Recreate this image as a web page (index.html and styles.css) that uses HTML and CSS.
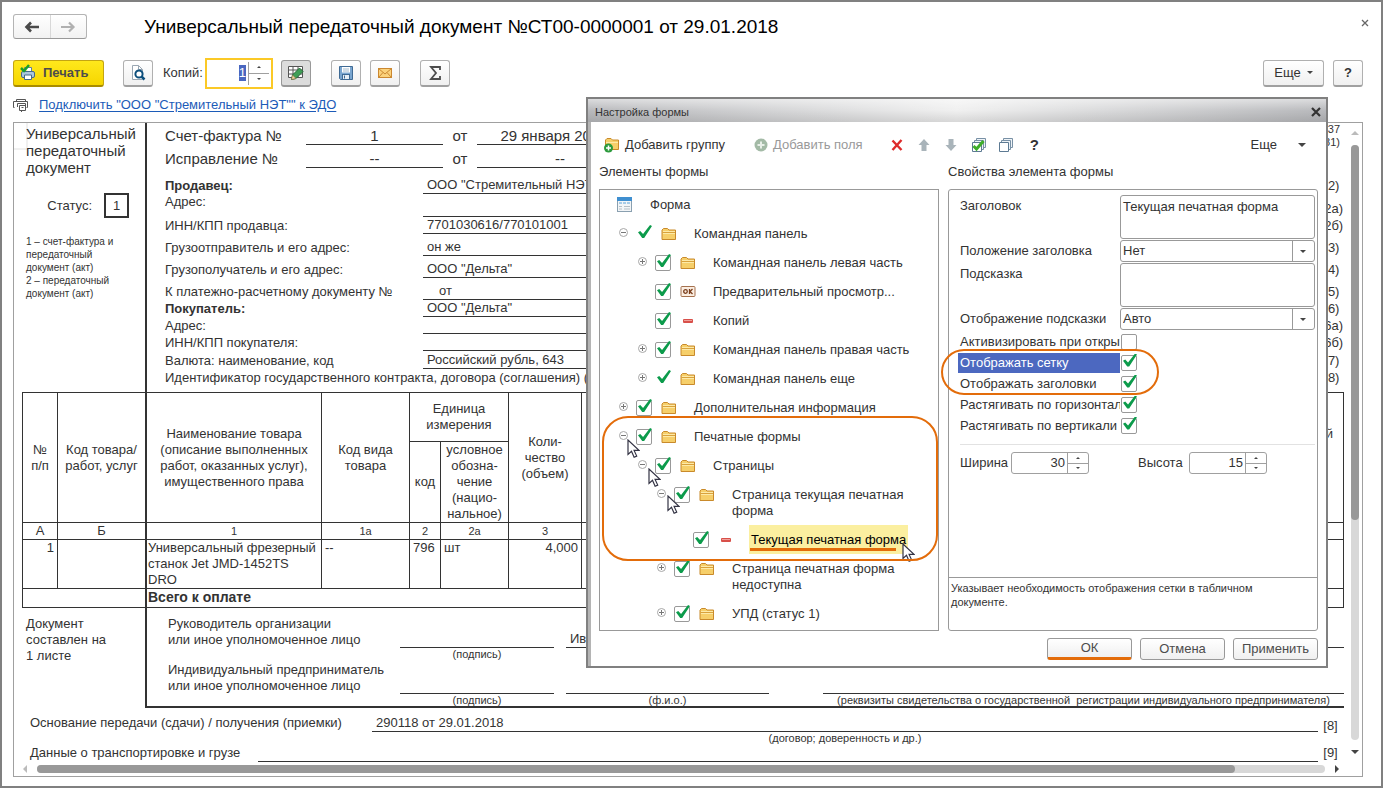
FILE: index.html
```html
<!DOCTYPE html>
<html lang="ru">
<head>
  <meta charset="UTF-8">
  <meta name="viewport" content="width=device-width, initial-scale=1.0">
  <title>Универсальный передаточный документ</title>
  <link rel="stylesheet" href="styles.css">
</head>
<body>
  <!-- shared icons -->
  <svg class="sprite" xmlns="http://www.w3.org/2000/svg">
    <symbol id="folder" viewBox="0 0 16 14">
      <path d="M1 12.500V3l1.500-1.500h4L8 3h6.500v9.500z" fill="#f6cf6a" stroke="#c98a2b"/>
      <path d="M1.500 5.500h12.500" stroke="#d9a23c"/>
      <path d="M2 4.500h12M2 6.500h12" stroke="#fdeaa8"/>
    </symbol>
    <symbol id="minus" viewBox="0 0 16 14">
      <rect x="3" y="5" width="10" height="4" rx="1" fill="#d8504a"/>
      <path d="M4 6.500h8" stroke="#f0a09a"/>
    </symbol>
    <symbol id="okbtn" viewBox="0 0 16 14">
      <rect x="1" y="1.500" width="14" height="10" rx="1" fill="#fbeee2" stroke="#a5714e"/>
      <circle cx="5.500" cy="6.500" r="1.800" fill="none" stroke="#7a3e1c" stroke-width="1.300"/>
      <path d="M9.500 4v5M12.500 4l-2.500 2.500 2.500 2.500" fill="none" stroke="#7a3e1c" stroke-width="1.300"/>
    </symbol>
    <symbol id="open" viewBox="0 0 11 11">
      <circle cx="5.500" cy="5.500" r="4" fill="#fff" stroke="#a8a8a8"/>
      <path d="M3 5.500h5" stroke="#777"/>
    </symbol>
    <symbol id="shut" viewBox="0 0 11 11">
      <circle cx="5.500" cy="5.500" r="4" fill="#fff" stroke="#a8a8a8"/>
      <path d="M3 5.500h5M5.500 3v5" stroke="#777"/>
    </symbol>
    <symbol id="pointer" viewBox="0 0 13 20">
      <path d="M1 1v14.500l3.500-3.200 2.600 6 2.600-1.200-2.600-5.700h4.900z" fill="#fff" stroke="#334" stroke-width="1.200"/>
    </symbol>
  </svg>

  <div class="window">
    <header class="titlebar">
      <div class="nav">
        <button aria-label="Назад"><svg width="16" height="12" viewBox="0 0 16 12"><path d="M2 6h13M7 1.500L2.500 6 7 10.500" fill="none" stroke="#4a4a4a" stroke-width="2.600"/></svg></button>
        <button aria-label="Вперед"><svg width="16" height="12" viewBox="0 0 16 12"><path d="M1 6h13M9 1.500L13.500 6 9 10.500" fill="none" stroke="#b0b0b0" stroke-width="2.200"/></svg></button>
      </div>
      <h1>Универсальный передаточный документ №СТ00-0000001 от 29.01.2018</h1>
      <button class="close" aria-label="Закрыть"><svg width="8" height="8" viewBox="0 0 8 8"><path d="M1 1l6 6M7 1L1 7" stroke="#666" stroke-width="1.300"/></svg></button>
    </header>

    <div class="toolbar">
      <button class="btn print">
        <svg width="16" height="17" viewBox="0 0 16 17">
          <path d="M4.500 6V3.500h7V8" fill="#fff" stroke="#5c7d99"/>
          <rect x="1.500" y="7.500" width="13" height="6" rx="1.500" fill="#a9c6dd" stroke="#44698a"/>
          <path d="M4.500 11h7v4.500h-7z" fill="#fff" stroke="#44698a"/>
          <path d="M1 4l3 3 5-6" fill="none" stroke="#19a02a" stroke-width="2.500"/>
        </svg>
        Печать
      </button>
      <button class="btn preview" aria-label="Просмотр">
        <svg width="16" height="18" viewBox="0 0 16 18"><path d="M2.500 1.500h6l4 4v10h-10z" fill="#fff" stroke="#9aa7b3"/><path d="M8.500 1.500v4h4" fill="none" stroke="#9aa7b3"/><circle cx="9" cy="10" r="3.600" fill="#fff" stroke="#0d4f7c" stroke-width="2"/><path d="M11.500 12.500l3 3" stroke="#0d4f7c" stroke-width="2.500"/></svg>
      </button>
      <label for="copies">Копий:</label>
      <div class="spin copies">
        <input id="copies" type="text" value="1">
        <div class="arrows"><button class="up" aria-label="Больше"></button><button class="down" aria-label="Меньше"></button></div>
      </div>
      <button class="btn pressed" aria-label="Редактирование">
        <svg width="18" height="16" viewBox="0 0 18 16"><path d="M1.500 1.500h14v11h-14zM1.500 5h14M1.500 9h14M6 1.500v11M11 1.500v11" fill="#fff" stroke="#555"/><path d="M4.500 14.500l1-4.500 7-7 3.500 3.500-7 7z" fill="#3f9f56" stroke="#2a6d3b"/><path d="M4.500 14.500l1-4.500 3.500 3.500z" fill="#f0d2a0" stroke="#8a6a40" stroke-width=".6"/></svg>
      </button>
      <button class="btn save" aria-label="Сохранить">
        <svg width="16" height="16" viewBox="0 0 16 16"><path d="M1.500 1.500h13v13h-12l-1-1z" fill="#79a5cf" stroke="#3f6a94"/><rect x="4" y="2" width="8" height="5.500" fill="#fff"/><path d="M5 4h6M5 6h6" stroke="#a0b8cc"/><rect x="4.500" y="9.500" width="7" height="5" fill="#e6eef5" stroke="#3f6a94"/><path d="M6.500 10.500v3" stroke="#3f6a94"/></svg>
      </button>
      <button class="btn mail" aria-label="Отправить">
        <svg width="16" height="12" viewBox="0 0 16 12"><rect x="1.500" y="1.500" width="13" height="9" fill="#fbd27c" stroke="#cb8830"/><path d="M1.500 1.500L8 7l6.500-5.500M1.500 10.500L6 5.500M14.500 10.500L10 5.500" fill="none" stroke="#cb8830"/></svg>
      </button>
      <button class="btn sum" aria-label="Сумма">
        <svg width="14" height="16" viewBox="0 0 14 16"><path d="M12 5V2H3l5 6-5 6h9v-3" fill="none" stroke="#4c4c4c" stroke-width="1.800"/></svg>
      </button>
      <button class="btn more">Еще</button>
      <button class="btn help">?</button>
    </div>

    <div class="edo">
      <svg width="16" height="15" viewBox="0 0 16 15"><path d="M3.500 3.500v-2h9v2M1.500 9.500h-1v-6h14v6h-1M4.500 9v-3.500h8V9M6.500 7.500h6v5h-6zM8.500 9.500h2M8.500 14v-1.500" fill="none" stroke="#555"/></svg>
      <a href="#">Подключить "ООО "Стремительный НЭТ"" к ЭДО</a>
    </div>

    <main class="sheet">
      <div class="doc">
        <section class="top">
          <div class="side">
            <p class="name">Универсальный<br>передаточный<br>документ</p>
            <div class="status">Статус: <span>1</span></div>
            <p class="note">1 – счет-фактура и<br>передаточный<br>документ (акт)<br>2 – передаточный<br>документ (акт)</p>
          </div>
          <div class="facts">
            <div class="fact h22 big">
              <span class="head">Счет-фактура №</span><span class="num">1</span><span class="from">от</span><span class="date">29 января 2018 г.</span>
              <span class="law">№ 1137<br>№ 981)</span>
            </div>
            <div class="fact h23 big">
              <span class="head">Исправление №</span><span class="num">--</span><span class="from">от</span><span class="date">--</span>
            </div>
            <div class="fact h26"><b>Продавец:</b><span class="val">ООО "Стремительный НЭТ"</span><span class="code">(2)</span></div>
            <div class="fact h23"><span class="label-top">Адрес:</span><span class="val"></span><span class="code">(2а)</span></div>
            <div class="fact h17"><span>ИНН/КПП продавца:</span><span class="val">7701030616/770101001</span><span class="code">(2б)</span></div>
            <div class="fact h22"><span>Грузоотправитель и его адрес:</span><span class="val">он же</span><span class="code">(3)</span></div>
            <div class="fact h22"><span>Грузополучатель и его адрес:</span><span class="val">ООО "Дельта"</span><span class="code">(4)</span></div>
            <div class="fact h22"><span>К платежно-расчетному документу №</span><span class="val inset">от</span><span class="code">(5)</span></div>
            <div class="fact h17"><b>Покупатель:</b><span class="val">ООО "Дельта"</span><span class="code">(6)</span></div>
            <div class="fact h17"><span>Адрес:</span><span class="val"></span><span class="code">(6а)</span></div>
            <div class="fact h17"><span>ИНН/КПП покупателя:</span><span class="val"></span><span class="code">(6б)</span></div>
            <div class="fact h18"><span>Валюта: наименование, код</span><span class="val">Российский рубль, 643</span><span class="code">(7)</span></div>
            <div class="fact h17 long"><span>Идентификатор государственного контракта, договора (соглашения) (при наличии)</span><span class="code">(8)</span></div>
          </div>
        </section>

        <table class="goods">
          <colgroup>
            <col class="c-n"><col class="c-code"><col class="c-name"><col class="c-kind"><col class="c-unit"><col class="c-unitname"><col class="c-qty"><col><col class="c-reg">
          </colgroup>
          <thead>
            <tr class="r-unit">
              <th rowspan="2">№<br>п/п</th>
              <th rowspan="2" class="bold-edge">Код товара/<br>работ, услуг</th>
              <th rowspan="2">Наименование товара<br>(описание выполненных<br>работ, оказанных услуг),<br>имущественного права</th>
              <th rowspan="2">Код вида<br>товара</th>
              <th colspan="2">Единица<br>измерения</th>
              <th rowspan="2">Коли-<br>чество<br>(объем)</th>
              <th rowspan="2">Цена (тариф)<br>за единицу<br>измерения</th>
              <th rowspan="2">Регистрационный<br>номер<br>таможенной<br>декларации</th>
            </tr>
            <tr class="r-sub">
              <th>код</th>
              <th>условное<br>обозна-<br>чение<br>(нацио-<br>нальное)</th>
            </tr>
            <tr class="r-index">
              <th class="letter">А</th><th class="letter bold-edge">Б</th><th>1</th><th>1а</th><th>2</th><th>2а</th><th>3</th><th>4</th><th>11</th>
            </tr>
          </thead>
          <tbody>
            <tr class="r-item">
              <td class="right">1</td><td class="bold-edge"></td><td class="item-name">Универсальный фрезерный станок Jet JMD-1452TS DRO</td><td>--</td><td>796</td><td>шт</td><td class="right">4,000</td><td></td><td></td>
            </tr>
            <tr class="r-total">
              <td colspan="2" class="bold-edge"></td><td colspan="7" class="item-name">Всего к оплате</td>
            </tr>
          </tbody>
        </table>

        <section class="signs">
          <div class="side pages">Документ<br>составлен на<br>1 листе</div>
          <div class="people">
            <div class="person">
              <span class="who">Руководитель организации<br>или иное уполномоченное лицо</span>
              <div class="slot"><span class="line"></span><small>(подпись)</small></div>
              <div class="slot"><span class="line">Иванов И. И.</span><small>(ф.и.о.)</small></div>
              <div class="slot wide"><span class="line"></span></div>
            </div>
            <div class="person">
              <span class="who">Индивидуальный предприниматель<br>или иное уполномоченное лицо</span>
              <div class="slot"><span class="line"></span><small>(подпись)</small></div>
              <div class="slot"><span class="line"></span><small>(ф.и.о.)</small></div>
              <div class="slot wide"><span class="line"></span><small>(реквизиты свидетельства о государственной &nbsp;регистрации индивидуального предпринимателя)</small></div>
            </div>
          </div>
        </section>

        <div class="basis">
          <span class="basis-label">Основание передачи (сдачи) / получения (приемки)</span>
          <div class="slot"><span class="line">290118 от 29.01.2018</span><small>(договор; доверенность и др.)</small></div>
          <span class="code">[8]</span>
        </div>
        <div class="basis cargo">
          <span class="basis-label">Данные о транспортировке и грузе</span>
          <div class="slot"><span class="line"></span></div>
          <span class="code">[9]</span>
        </div>
      </div>
      <div class="vbar"><i class="tri tri-up"></i><div class="track"><div class="thumb"></div></div><i class="tri tri-down"></i></div>
      <div class="hbar"><i class="tri tri-left"></i><div class="track"><div class="thumb"></div></div><i class="tri tri-right"></i></div>
    </main>
  </div>

  <div class="dialog" role="dialog" aria-label="Настройка формы">
    <div class="dialog-title">
      <span>Настройка формы</span>
      <button aria-label="Закрыть"><svg width="10" height="10" viewBox="0 0 10 10"><path d="M1 1l8 8M9 1L1 9" stroke="#333" stroke-width="2.200"/></svg></button>
    </div>
    <div class="dialog-body">
      <div class="tools">
        <button class="add-group">
          <svg width="16" height="16" viewBox="0 0 16 16"><path d="M1.500 12.500V3L3 1.500h4L8.500 3h6v9.500z" fill="#f6cf6a" stroke="#c98a2b"/><path d="M2 5.500h12" stroke="#fdeaa8"/><circle cx="4.500" cy="11" r="4.500" fill="#2c9a3d"/><path d="M2 11h5M4.500 8.500v5" stroke="#fff" stroke-width="1.500"/></svg>
          Добавить группу
        </button>
        <button class="add-field" disabled>
          <svg width="14" height="14" viewBox="0 0 14 14"><circle cx="7" cy="7" r="6.500" fill="#a3baa6"/><path d="M3.500 7h7M7 3.500v7" stroke="#e8efe8" stroke-width="2"/></svg>
          Добавить поля
        </button>
        <button class="del" aria-label="Удалить"><svg width="12" height="12" viewBox="0 0 12 12"><path d="M1.500 1.500l9 9.500M10.500 1L1.500 11" stroke="#dd2b2b" stroke-width="2.400"/></svg></button>
        <button class="move-up" aria-label="Вверх"><svg width="12" height="12" viewBox="0 0 12 12"><path d="M6 0l5.500 6H8.500v6h-5V6H.5z" fill="#a9b4ba"/></svg></button>
        <button class="move-down" aria-label="Вниз"><svg width="12" height="12" viewBox="0 0 12 12"><path d="M6 12l5.500-6H8.500V0h-5v6H.5z" fill="#a9b4ba"/></svg></button>
        <button class="all" aria-label="Установить флажки"><svg width="16" height="16" viewBox="0 0 16 16"><path d="M5.500 4V1.500h9v9H12M3.500 5.500v-2h9v9h-2" fill="#eef3f7" stroke="#7890a5"/><path d="M1.500 5.500h9v9h-9z" fill="#fff" stroke="#5d7a93"/><path d="M2.500 9l3 3 7-8" fill="none" stroke="#3fae2a" stroke-width="3"/></svg></button>
        <button class="none" aria-label="Снять флажки"><svg width="16" height="16" viewBox="0 0 16 16"><path d="M5.500 4V1.500h9v9H12M3.500 5.500v-2h9v9h-2" fill="#eef3f7" stroke="#7890a5"/><path d="M1.500 5.500h9v9h-9z" fill="#fff" stroke="#5d7a93"/></svg></button>
        <button class="ask">?</button>
        <button class="more">Еще <i class="tri tri-down"></i></button>
      </div>

      <div class="columns">
        <section>
          <h2>Элементы формы</h2>
          <ul class="tree">
            <li class="root"><svg width="15" height="15" viewBox="0 0 15 15"><rect x=".5" y=".5" width="14" height="14" fill="#f2f5f7" stroke="#8aa0b0"/><path d="M0 0h15v4H0z" fill="#3f8fd0"/><path d="M2 6h3M6 6h3M10 6h3" stroke="#5ba2d8"/><path d="M2 9.500h3M7 9.500h6M2 12h3M7 12h6" stroke="#b5bfc6"/></svg><span>Форма</span></li>
            <li class="l1"><svg class="tg"><use href="#open"/></svg><input type="checkbox" class="bare" id="t1" checked><svg class="ic"><use href="#folder"/></svg><label for="t1">Командная панель</label></li>
            <li class="l2"><svg class="tg"><use href="#shut"/></svg><input type="checkbox" id="t2" checked><svg class="ic"><use href="#folder"/></svg><label for="t2">Командная панель левая часть</label></li>
            <li class="l2"><i class="tg"></i><input type="checkbox" id="t3" checked><svg class="ic"><use href="#okbtn"/></svg><label for="t3">Предварительный просмотр...</label></li>
            <li class="l2"><i class="tg"></i><input type="checkbox" id="t4" checked><svg class="ic"><use href="#minus"/></svg><label for="t4">Копий</label></li>
            <li class="l2"><svg class="tg"><use href="#shut"/></svg><input type="checkbox" id="t5" checked><svg class="ic"><use href="#folder"/></svg><label for="t5">Командная панель правая часть</label></li>
            <li class="l2"><svg class="tg"><use href="#shut"/></svg><input type="checkbox" class="bare" id="t6" checked><svg class="ic"><use href="#folder"/></svg><label for="t6">Командная панель еще</label></li>
            <li class="l1"><svg class="tg"><use href="#shut"/></svg><input type="checkbox" id="t7" checked><svg class="ic"><use href="#folder"/></svg><label for="t7">Дополнительная информация</label></li>
            <li class="l1"><svg class="tg"><use href="#open"/></svg><input type="checkbox" id="t8" checked><svg class="ic"><use href="#folder"/></svg><label for="t8">Печатные формы</label><svg class="pointer"><use href="#pointer"/></svg></li>
            <li class="l2"><svg class="tg"><use href="#open"/></svg><input type="checkbox" id="t9" checked><svg class="ic"><use href="#folder"/></svg><label for="t9">Страницы</label><svg class="pointer"><use href="#pointer"/></svg></li>
            <li class="l3"><svg class="tg"><use href="#open"/></svg><input type="checkbox" id="t10" checked><svg class="ic"><use href="#folder"/></svg><label for="t10">Страница текущая печатная форма</label><svg class="pointer"><use href="#pointer"/></svg></li>
            <li class="l4 current"><i class="tg"></i><input type="checkbox" id="t11" checked><svg class="ic"><use href="#minus"/></svg><label for="t11">Текущая печатная форма</label><svg class="pointer"><use href="#pointer"/></svg></li>
            <li class="l3"><svg class="tg"><use href="#shut"/></svg><input type="checkbox" id="t12" checked><svg class="ic"><use href="#folder"/></svg><label for="t12">Страница печатная форма недоступна</label></li>
            <li class="l3"><svg class="tg"><use href="#shut"/></svg><input type="checkbox" id="t13" checked><svg class="ic"><use href="#folder"/></svg><label for="t13">УПД (статус 1)</label></li>
          </ul>
        </section>

        <section>
          <h2>Свойства элемента формы</h2>
          <div class="props">
            <form class="fields">
              <div class="field"><label for="f1">Заголовок</label><textarea id="f1">Текущая печатная форма</textarea></div>
              <div class="field"><label for="f2">Положение заголовка</label><div class="pick"><select id="f2"><option>Нет</option></select></div></div>
              <div class="field"><label for="f3">Подсказка</label><textarea id="f3"></textarea></div>
              <div class="field"><label for="f4">Отображение подсказки</label><div class="pick"><select id="f4"><option>Авто</option></select></div></div>
              <div class="tick"><label for="f5">Активизировать при открытии</label><input type="checkbox" id="f5"></div>
              <div class="tick selected"><label for="f6">Отображать сетку</label><input type="checkbox" id="f6" checked></div>
              <div class="tick"><label for="f7">Отображать заголовки</label><input type="checkbox" id="f7" checked></div>
              <div class="tick"><label for="f8">Растягивать по горизонтали</label><input type="checkbox" id="f8" checked></div>
              <div class="tick"><label for="f9">Растягивать по вертикали</label><input type="checkbox" id="f9" checked></div>
              <div class="size">
                <label for="w">Ширина</label>
                <div class="spin"><input id="w" type="text" value="30"><div class="arrows"><button type="button" class="up" aria-label="Больше"></button><button type="button" class="down" aria-label="Меньше"></button></div></div>
                <label for="h" class="second">Высота</label>
                <div class="spin"><input id="h" type="text" value="15"><div class="arrows"><button type="button" class="up" aria-label="Больше"></button><button type="button" class="down" aria-label="Меньше"></button></div></div>
              </div>
            </form>
            <p class="hint">Указывает необходимость отображения сетки в табличном документе.</p>
          </div>
        </section>
      </div>

      <div class="actions">
        <button class="ok">ОК</button>
        <button>Отмена</button>
        <button>Применить</button>
      </div>
    </div>
    <div class="ring ring-tree"></div>
    <div class="ring ring-props"></div>
  </div>

  <script>
    document.getElementById('copies').select();
  </script>
</body>
</html>
```
FILE: styles.css
```css
* {
  box-sizing: border-box;
}
body {
  margin: 0;
  font: 13px/16px "Liberation Sans", Arial, sans-serif;
  color: #333;
  background: #fff;
}
h1, h2, p, ul {
  margin: 0;
  padding: 0;
  font-weight: normal;
}
button, input, select, textarea {
  font: inherit;
  color: inherit;
  margin: 0;
  padding: 0;
  border: none;
  background: none;
  outline: none;
}
button {
  display: flex;
  align-items: center;
  justify-content: center;
}
svg {
  display: block;
  flex: none;
}
.sprite {
  position: absolute;
  width: 0;
  height: 0;
}
.window {
  display: flex;
  flex-direction: column;
  min-height: 100vh;
  padding: 12px 18px 9px 11px;
  border: 2px solid #808080;
}

/* header */
.titlebar {
  display: flex;
  align-items: center;
}
.nav {
  display: flex;
  width: 74px;
  height: 25px;
  border: 1px solid #b4b4b4;
  border-bottom-color: #999;
  border-radius: 3px;
  background: linear-gradient(#fff, #f2f2f2);
}
.nav button {
  flex: 1;
}
.nav button + button {
  border-left: 1px solid #d8d8d8;
}
h1 {
  flex: 1;
  margin-left: 57px;
  font-size: 19px;
  line-height: 25px;
  color: #000;
}
.close {
  position: relative;
  width: 16px;
  height: 16px;
  margin: -8px -10px 0 0;
}

/* toolbar */
.toolbar {
  display: flex;
  align-items: center;
  height: 32px;
  margin-top: 18px;
}
.btn {
  width: 30px;
  height: 27px;
  border: 1px solid #b0b0b0;
  border-bottom: 2px solid #a0a0a0;
  border-radius: 3px;
  background: linear-gradient(#fff, #f0f0f0);
}
.print {
  justify-content: flex-start;
  gap: 7px;
  width: 91px;
  padding-left: 6px;
  border-color: #c4a512;
  border-bottom-color: #a98c00;
  background: linear-gradient(#ffe81c, #f6d600);
  font-weight: bold;
  color: #4c4c4c;
}
.preview {
  margin: 0 10px 0 19px;
}
.toolbar label {
  width: 42px;
}
.pressed {
  margin-left: 8px;
  border-color: #999;
  background: #dcdcdc;
}
.save {
  margin-left: 20px;
}
.mail {
  margin-left: 9px;
}
.sum {
  margin-left: 20px;
}
.toolbar .more {
  width: 61px;
  gap: 6px;
  margin: 0 9px 0 auto;
}
.toolbar .more::after {
  content: "";
  border: 3px solid transparent;
  border-top-color: #444;
  border-bottom: none;
}
.help {
  font-weight: bold;
}
.edo {
  display: flex;
  align-items: center;
  gap: 10px;
  height: 32px;
}
.edo a {
  color: #1c5bb8;
  text-underline-offset: 2px;
}

/* numeric box with arrows */
.spin {
  display: flex;
  width: 78px;
  height: 22px;
  border: 1px solid #a0a0a0;
  border-radius: 3px;
  background: #fff;
}
.spin input {
  flex: 1;
  min-width: 0;
  padding-right: 2px;
  text-align: right;
}
.arrows {
  display: flex;
  flex-direction: column;
  width: 21px;
  border-left: 1px solid #a0a0a0;
}
.arrows button {
  flex: 1;
}
.arrows .up {
  border-bottom: 1px solid #a0a0a0;
}
.arrows button::after {
  content: "";
  border: 2px solid transparent;
}
.arrows .up::after {
  border-bottom-color: #444;
  border-top: none;
}
.arrows .down::after {
  border-top-color: #444;
  border-bottom: none;
}
.copies {
  width: 68px;
  height: 31px;
  padding: 2px;
  border: 2px solid #fbc926;
  border-radius: 0;
}
.copies input::selection {
  background: #4a67c0;
  color: #fff;
}

/* printed form */
.sheet {
  flex: 1;
  display: grid;
  grid-template-columns: 1fr 17px;
  grid-template-rows: 1fr auto;
  margin-top: 1px;
  border: 1px solid #a0a0a0;
}
.doc {
  position: relative;
  z-index: 0;
  padding: 0 1px 0 8px;
}
.doc::before {
  content: "";
  position: absolute;
  z-index: -1;
  left: 0;
  top: 0;
  width: 12px;
  height: 25px;
  border: solid #f0f0f0;
  border-width: 0 2px 2px 0;
}
.top, .signs {
  display: flex;
}
.side {
  flex: none;
  width: 123px;
  padding-left: 4px;
}
.top {
  height: 269px;
}
.name {
  margin-top: 2px;
  font-size: 15px;
  line-height: 17px;
}
.status {
  display: flex;
  align-items: center;
  justify-content: flex-end;
  gap: 12px;
  margin: 17px 16px 17px 0;
}
.status span {
  width: 25px;
  height: 25px;
  border: 2px solid #333;
  line-height: 21px;
  text-align: center;
}
.note {
  font-size: 10px;
  line-height: 13px;
}
.facts {
  position: relative;
  flex: 1;
  padding-left: 18px;
  border-left: 2px solid #333;
}
.fact {
  display: flex;
  align-items: flex-end;
}
.h17 {
  height: 17px;
}
.h18 {
  height: 18px;
}
.h22 {
  height: 22px;
}
.h23 {
  height: 23px;
}
.h26 {
  height: 26px;
}
.fact > :first-child {
  width: 258px;
}
.fact .label-top {
  align-self: flex-start;
}
.val, .num, .date, .line {
  height: 17px;
  border-bottom: 1px solid #333;
}
.val {
  flex: 1;
  padding-left: 4px;
}
.inset {
  padding-left: 16px;
}
.code {
  width: 25px;
  text-align: center;
}
.big {
  font-size: 15px;
}
.big .head {
  width: 141px;
  padding-bottom: 1px;
}
.num {
  width: 137px;
  text-align: center;
}
.from {
  width: 34px;
  padding-bottom: 1px;
  text-align: center;
}
.date {
  width: 166px;
  text-align: center;
}
.law {
  position: absolute;
  top: 0;
  right: 4px;
  font-size: 11px;
  line-height: 13px;
  text-align: right;
}
.fact.long {
  justify-content: space-between;
}
.fact.long > :first-child {
  width: auto;
}

/* goods */
.goods {
  width: 100%;
  table-layout: fixed;
  border-collapse: separate;
  border-spacing: 0;
  border-top: 1px solid #333;
}
.goods th, .goods td {
  padding: 0 2px;
  border: solid #333;
  border-width: 0 1px 1px 0;
}
.goods tr > :first-child {
  border-left-width: 1px;
}
.goods .r-sub > :first-child {
  border-left-width: 0;
}
.goods .bold-edge {
  border-right-width: 2px;
}
.goods th {
  font-weight: normal;
  text-align: center;
}
.goods td {
  padding-left: 3px;
  vertical-align: top;
}
.goods .item-name {
  padding-left: 1px;
}
.goods td.right {
  padding-right: 3px;
  text-align: right;
}
.c-n {
  width: 36px;
}
.c-code {
  width: 89px;
}
.c-name {
  width: 175px;
}
.c-kind {
  width: 88px;
}
.c-unit {
  width: 31px;
}
.c-unitname {
  width: 68px;
}
.c-qty {
  width: 73px;
}
.c-reg {
  width: 128px;
}
.r-unit {
  height: 49px;
}
.r-sub {
  height: 81px;
}
.r-index {
  height: 17px;
  font-size: 11px;
}
.r-index .letter {
  font-size: 13px;
}
.r-item {
  height: 49px;
}
.r-total {
  height: 19px;
  font-weight: bold;
  font-size: 14px;
}

/* signatures */
.pages {
  padding-top: 8px;
}
.people {
  flex: 1;
  padding: 8px 0 0 21px;
  border: solid #333;
  border-width: 0 0 2px 2px;
}
.person {
  display: flex;
  align-items: flex-start;
  height: 46px;
}
.who {
  width: 232px;
}
.slot {
  display: flex;
  flex-direction: column;
  width: 154px;
  padding-top: 15px;
  margin-right: 12px;
}
.slot + .slot {
  width: 203px;
  margin-right: 54px;
}
.slot.wide {
  flex: 1;
  width: auto;
  margin-right: 0;
}
.slot .line {
  padding-left: 4px;
}
small {
  font-size: 11px;
  line-height: 13px;
  text-align: center;
}
.person:last-child {
  height: 44px;
}
.basis {
  display: flex;
  align-items: flex-start;
  padding: 7px 1px 0 8px;
}
.basis-label {
  width: 342px;
}
.basis .slot {
  flex: 1;
  margin: 0;
  padding: 0;
}
.basis .code {
  padding-top: 3px;
}
.cargo {
  height: 18px;
  padding-top: 0;
}
.cargo .basis-label {
  width: 228px;
}
.cargo .code {
  padding-top: 0;
}

/* scroll bars */
.tri {
  border: 4px solid transparent;
}
.tri-up {
  border-bottom-color: #bbb;
  border-top: none;
}
.tri-down {
  border-top-color: #444;
  border-bottom: none;
}
.tri-left {
  border-right-color: #bbb;
  border-left: none;
}
.tri-right {
  border-left-color: #444;
  border-right: none;
}
.vbar {
  display: flex;
  flex-direction: column;
  align-items: center;
  gap: 10px;
  padding: 8px 0 11px 3px;
}
.vbar .track {
  flex: 1;
  width: 8px;
}
.track {
  border-radius: 4px;
  background: #d8d8d8;
}
.thumb {
  border-radius: 4px;
  background: #999;
}
.vbar .thumb {
  height: 63%;
}
.hbar {
  grid-column: 1 / 3;
  display: flex;
  align-items: center;
  gap: 10px;
  padding: 0 23px 3px 9px;
}
.hbar .track {
  flex: 1;
  height: 8px;
}
.hbar .thumb {
  width: 93%;
  height: 8px;
}

/* settings dialog */
.dialog {
  position: absolute;
  left: 586px;
  top: 97px;
  width: 742px;
  border: 2px solid #808080;
  background: #fff;
}
.dialog-title {
  display: flex;
  align-items: center;
  justify-content: space-between;
  height: 23px;
  padding: 2px 4px 0 7px;
  background: linear-gradient(to bottom, rgba(255,255,255,.5), rgba(255,255,255,0) 50%, rgba(0,0,0,.1)), linear-gradient(to right, #b8b9bc, #f0f0f0 50%, #b8b9bc);
  font-size: 11px;
}
.dialog-title button {
  width: 12px;
  height: 12px;
}
.dialog-body {
  padding: 9px 8px 6px 8px;
  border-left: 3px solid #b4b4b4;
}
.tools {
  display: flex;
  align-items: center;
  height: 28px;
  padding: 0 12px 0 5px;
}
.tools button {
  gap: 5px;
}
.add-field {
  margin-left: 29px;
  color: #999;
}
.tools .del {
  margin-left: 28px;
}
.tools .move-up, .tools .move-down {
  margin-left: 15px;
}
.tools .all {
  margin-left: 14px;
}
.tools .none {
  margin-left: 11px;
}
.tools .ask {
  margin-left: 16px;
  font-size: 15px;
  font-weight: bold;
}
.tools .more {
  gap: 21px;
  margin-left: auto;
}
.columns {
  display: grid;
  grid-template-columns: 340px 1fr;
  gap: 9px;
}
h2 {
  height: 30px;
  padding-top: 5px;
  font-size: 13px;
}
.tree {
  height: 442px;
  border: 1px solid #999;
  list-style: none;
}
.tree li {
  position: relative;
  display: flex;
  align-items: flex-start;
  min-height: 29px;
  padding: 7px 20px 0 18px;
}
.tree li.root {
  gap: 18px;
  padding-left: 17px;
}
.tree .l2 {
  padding-left: 37px;
}
.tree .l3 {
  padding-left: 56px;
  padding-bottom: 6px;
}
.tree .l4 {
  padding-left: 75px;
}
.tg {
  flex: none;
  width: 11px;
  height: 11px;
  margin: 1px 7px 0 0;
}
.ic {
  width: 16px;
  height: 14px;
  margin: 1px 17px 0 9px;
}
input[type="checkbox"] {
  appearance: none;
  position: relative;
  flex: none;
  width: 16px;
  height: 16px;
  border: 1px solid #999;
  border-radius: 2px;
  background: #fff;
}
input.bare {
  border-color: transparent;
}
input[type="checkbox"]:checked::after {
  content: "";
  position: absolute;
  left: 1px;
  top: -2px;
  width: 14px;
  height: 13px;
  background: #0c9b4b;
  clip-path: polygon(0 55%, 16% 46%, 36% 70%, 86% 0, 100% 8%, 44% 100%, 30% 100%);
}
.current label {
  flex: 1;
  margin: -7px -8px 0 -2px;
  padding: 7px 2px 6px;
  background: linear-gradient(#e36c0a, #e36c0a) 1px 23px / 146px 3px no-repeat #fbefa0;
  color: #000;
  white-space: nowrap;
}
.tree .l4 {
  padding-right: 39px;
}
.pointer {
  position: absolute;
  left: 27px;
  top: 17px;
  width: 13px;
  height: 20px;
}
.l2 .pointer {
  left: 48px;
}
.l3 .pointer {
  left: 67px;
  top: 15px;
}
.l4 .pointer {
  left: 302px;
  top: 18px;
}
.ring {
  position: absolute;
  border: 2px solid #e36c0a;
}
.ring-tree {
  left: 14px;
  top: 317px;
  width: 336px;
  height: 145px;
  border-radius: 26px;
}
.ring-props {
  left: 353px;
  top: 250px;
  width: 218px;
  height: 46px;
  border-radius: 23px;
}

/* properties */
.props {
  display: flex;
  flex-direction: column;
  height: 442px;
  border: 1px solid #999;
  border-radius: 3px;
}
.fields {
  flex: 1;
  padding: 5px 2px 0 11px;
}
.field {
  display: flex;
  margin-bottom: 1px;
}
.field label {
  width: 160px;
  padding-top: 3px;
}
.field textarea, .pick {
  flex: 1;
  height: 44px;
  border: 1px solid #999;
  border-radius: 3px;
  resize: none;
}
.field textarea {
  padding: 3px 2px;
}
.pick {
  position: relative;
  height: 22px;
}
.pick::before {
  content: "";
  position: absolute;
  right: 0;
  top: 0;
  width: 21px;
  height: 20px;
  border-left: 1px solid #999;
}
.pick::after {
  content: "";
  position: absolute;
  right: 8px;
  top: 9px;
  border: 3px solid transparent;
  border-top-color: #444;
  border-bottom: none;
}
.pick select {
  width: 100%;
  height: 20px;
  padding-left: 2px;
  appearance: none;
}
.tick {
  display: flex;
  align-items: center;
  gap: 1px;
  height: 21px;
}
.tick label {
  width: 162px;
  margin-left: -2px;
  padding: 2px 0 2px 2px;
  overflow: hidden;
  white-space: nowrap;
}
.selected label {
  background: #4c68c0;
  color: #fff;
}
.size {
  display: flex;
  align-items: center;
  margin-top: 8px;
  padding-top: 7px;
  border-top: 1px solid #e2e2e2;
}
.size label {
  width: 51px;
}
.size .second {
  margin-left: 49px;
}
.hint {
  height: 53px;
  padding: 3px 40px 0 2px;
  border-top: 1px solid #999;
  font-size: 11px;
  line-height: 14px;
}
.actions {
  display: flex;
  justify-content: flex-end;
  gap: 8px;
  margin-top: 7px;
}
.actions button {
  width: 85px;
  height: 22px;
  border: 1px solid #999;
  border-radius: 3px;
  background: linear-gradient(#fff, #f0f0f0);
  color: #4c4c4c;
}
.actions .ok {
  border-bottom: 3px solid #e36c0a;
}
```
